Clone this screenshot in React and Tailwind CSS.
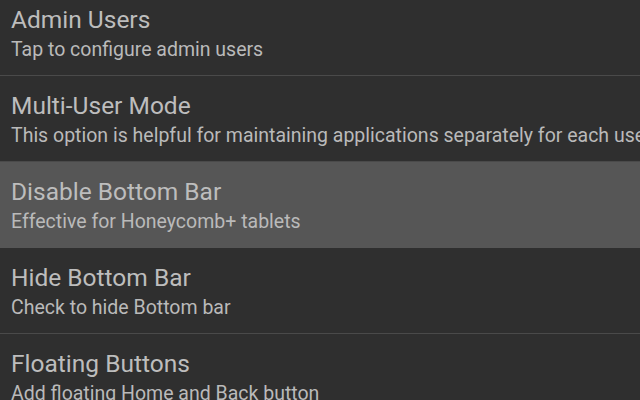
export default function App() {
  const rows = [
    { t: "Admin Users", s: "Tap to configure admin users" },
    { t: "Multi-User Mode", s: "This option is helpful for maintaining applications separately for each user" },
    { t: "Disable Bottom Bar", s: "Effective for Honeycomb+ tablets", hl: true },
    { t: "Hide Bottom Bar", s: "Check to hide Bottom bar" },
    { t: "Floating Buttons", s: "Add floating Home and Back button" },
  ];
  return (
    <div className="w-[640px] h-[400px] overflow-hidden bg-[#2f2f2f]" style={{ fontFamily: "Roboto, 'Noto Sans', sans-serif" }}>
      <div className="-mt-[10px] flex flex-col">
        {rows.map((r) => (
          <div
            key={r.t}
            className={
              r.hl
                ? "h-[86px] shrink-0 bg-[#565656] border-b border-[#565656] pl-[11px] pt-[16px] overflow-hidden"
                : "h-[86px] shrink-0 border-b border-[#4a4a4a] pl-[11px] pt-[16px] overflow-hidden"
            }
          >
            <div className="text-[24.5px] leading-[28px] text-[#bdbdbd] whitespace-nowrap">{r.t}</div>
            <div className="mt-[4px] text-[19.5px] leading-[24px] text-[#bababa] whitespace-nowrap">{r.s}</div>
          </div>
        ))}
      </div>
    </div>
  );
}
